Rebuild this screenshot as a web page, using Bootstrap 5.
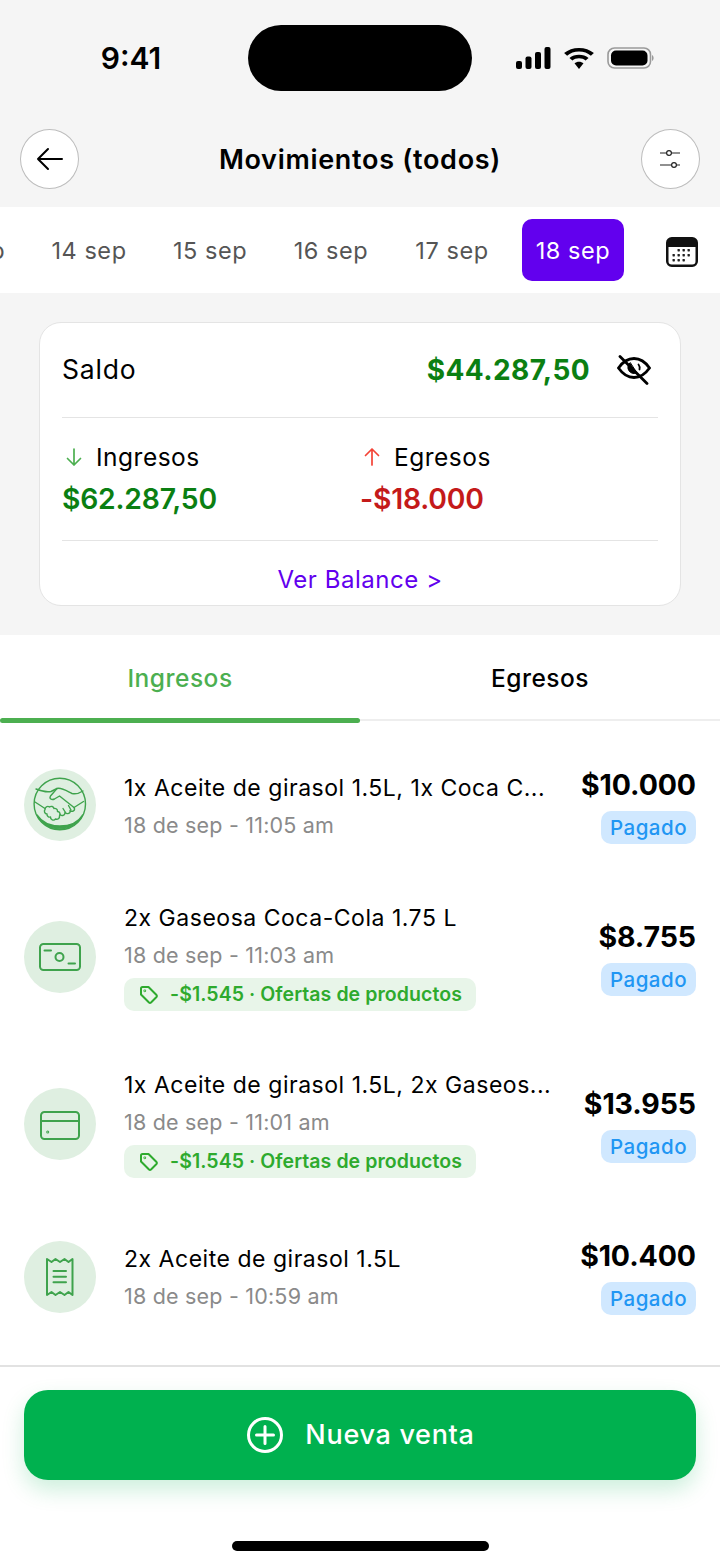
<!DOCTYPE html>
<html lang="es">
<head>
    <meta charset="UTF-8">
    <meta name="viewport" content="width=device-width, initial-scale=1.0">
    <title>Movimientos</title>
    <link rel="stylesheet" href="https://cdn.jsdelivr.net/npm/bootstrap@5.3.0/dist/css/bootstrap.min.css">
    <style>
        body { font-family: Inter, "Liberation Sans", sans-serif; background: #fff; color: #000; width: 720px; height: 1565px; overflow: hidden; }
        .top-area { background: #f5f5f5; }
        .status-bar { height: 115px; padding-top: 25px; }
        .status-time { width: 248px; height: 66px; font-size: 30px; font-weight: 600; padding-left: 14px; }
        .island { width: 224px; height: 66px; background: #000; border-radius: 33px; }
        .status-icons { width: 248px; height: 66px; padding-left: 44px; gap: 13px; }
        .head-row { height: 92px; padding: 14px 20px 18px; }
        .round-btn { width: 59px; height: 60px; padding: 0; border: 1px solid #bdbdbd; border-radius: 50%; background: #fff; }
        .head-title { font-size: 27px; font-weight: 600; letter-spacing: .7px; padding-top: 2px; }
        .date-strip { height: 86px; background: #fff; }
        .date-scroll { width: 624px; gap: 19px; overflow: hidden; }
        .date-item { flex: 0 0 102px; height: 62px; padding-top: 1px; font-size: 23.5px; letter-spacing: .55px; color: #555; border-radius: 10px; }
        .date-item.on { background: #6200ee; color: #fff; }
        .cal-box { width: 96px; padding: 4px 0 0 42px; }
        .summary-wrap { height: 342px; padding: 29px 39px 0; }
        .sum-card { height: 284px; border: 1px solid #e4e4e4; border-radius: 22px; padding: 0 22px; }
        .sum-top { height: 95px; border-bottom: 1px solid #e4e4e4; }
        .sum-mid { height: 123px; border-bottom: 1px solid #e4e4e4; padding-top: 24px; }
        .sum-label { font-size: 26.5px; letter-spacing: .8px; }
        .sum-total { font-size: 28px; font-weight: 700; letter-spacing: .4px; color: #0b7f12; }
        .eye-icon { margin: 0 7px 0 27px; }
        .sub-label { font-size: 24.5px; letter-spacing: .5px; height: 30px; gap: 13px; }
        .sub-label svg { margin-left: 3px; }
        .sub-total { font-size: 28.3px; font-weight: 600; letter-spacing: -.2px; line-height: 40px; margin-top: 7px; }
        .txt-in { color: #0b7f12; }
        .txt-out { color: #c41a1a; }
        .ver-link { display: block; padding-top: 14px; line-height: 50px; font-size: 24px; letter-spacing: .55px; color: #6200ee; text-align: center; text-decoration: none; }
        .tab-row { height: 86px; border-bottom: 2px solid #eeeeee; flex-wrap: nowrap; }
        .tab-row .nav-link { width: 360px; height: 86px; padding: 25px 0 0; text-align: center; font-size: 24.5px; font-weight: 500; letter-spacing: .5px; color: #000; border-radius: 0; position: relative; }
        .tab-row .nav-link.active { color: #4caf50; }
        .tab-row .nav-link.active::after { content: ""; position: absolute; left: 0; right: 0; bottom: -2px; height: 5px; background: #4caf50; border-radius: 3px; }
        .move-list { padding: 46px 24px 0; }
        .move-item { border: 0; padding: 0; margin-bottom: 55px; background: transparent; color: #000; }
        .move-item:nth-child(2) { margin-bottom: 51px; }
        .move-item:nth-child(3) { margin-bottom: 56px; }
        .move-icon { flex: 0 0 72px; width: 72px; height: 72px; border-radius: 50%; background: #dfefe1; margin-right: 28px; }
        .move-item:first-child .move-icon { margin-top: -1px; }
        .move-text { padding-top: 2px; }
        .move-text.with-promo { padding-bottom: 4px; }
        .move-title { font-size: 23px; letter-spacing: .52px; line-height: 34px; white-space: nowrap; }
        .move-time { font-size: 21.5px; letter-spacing: .2px; line-height: 34px; margin-top: 3px; color: #8a8a8a; white-space: nowrap; }
        .promo-pill { width: 352px; height: 33px; margin-top: 6px; padding-left: 15px; gap: 11px; background: #e8f5e9; border-radius: 10px; font-size: 19.5px; font-weight: 600; letter-spacing: .07px; color: #2eaa2e; white-space: nowrap; }
        .move-price { font-size: 28.5px; font-weight: 700; letter-spacing: -.1px; line-height: 36px; }
        .paid-pill { width: 95px; height: 33px; margin-top: 8px; padding: 0; line-height: 33px; background: #d0e8ff; color: #2196f3; border-radius: 10px; font-size: 20.5px; font-weight: 500; letter-spacing: .5px; }
        .foot-area { position: absolute; left: 0; right: 0; top: 1365px; border-top: 2px solid #e2e2e2; padding: 23px 24px 0; }
        .sale-btn { height: 90px; gap: 22px; padding-left: 14px; background: #00b14f; color: #fff; border: 0; border-radius: 24px; font-size: 27px; font-weight: 500; letter-spacing: .7px; box-shadow: 0 10px 22px rgba(0, 177, 79, .2); }
        .sale-btn:hover { background: #00b14f; color: #fff; }
        .home-bar { width: 257px; height: 10px; margin: 61px auto 0; background: #000; border-radius: 5px; }
    </style>
</head>
<body class="position-relative">
    <div class="top-area">
        <!-- Barra de estado -->
        <div class="status-bar d-flex">
            <div class="status-time d-flex align-items-center justify-content-center">9:41</div>
            <div class="island"></div>
            <div class="status-icons d-flex align-items-center">
                <svg width="35" height="22" viewBox="0 0 35 22"><rect x="0" y="14" width="6" height="8" rx="2"/><rect x="9.5" y="9.500" width="6" height="12.500" rx="2"/><rect x="19" y="5" width="6" height="17" rx="2"/><rect x="28.5" y="0" width="6" height="22" rx="2"/></svg>
                <svg width="30" height="21" viewBox="2 .9 26 21.600" preserveAspectRatio="none"><path d="M15 4.600c4 0 7.600 1.600 10.300 4.200l2.600-2.700C24.500 2.800 20 .9 15 .9S5.500 2.800 2.100 6.100l2.600 2.700C7.400 6.200 11 4.600 15 4.600z"/><path d="M15 11.500c2.200 0 4.200.9 5.700 2.300l2.600-2.700C21 9 18.200 7.800 15 7.800S9 9 6.700 11.100l2.600 2.700c1.500-1.400 3.500-2.300 5.700-2.300z"/><path d="M15 15c-1.500 0-2.900.6-3.900 1.600L15 22.500l3.900-5.900C17.900 15.600 16.500 15 15 15z"/></svg>
                <svg width="47" height="24" viewBox="0 0 47 24"><rect x="1" y="2" width="42.500" height="20" rx="6.500" fill="none" stroke="#9a9a9a" stroke-width="1.600"/><rect x="4" y="4.500" width="36.500" height="15" rx="5"/><path d="M45 9c1 .5 1.600 1.700 1.600 3s-.6 2.500-1.600 3z" fill="#9a9a9a"/></svg>
            </div>
        </div>

        <!-- Cabecera -->
        <div class="head-row d-flex align-items-center justify-content-between">
            <button class="round-btn d-flex align-items-center justify-content-center" type="button" aria-label="Volver">
                <svg width="28" height="24" viewBox="0 0 28 24" fill="none" stroke="#000" stroke-width="2" stroke-linecap="round" stroke-linejoin="round"><path d="M26 12H2M12 2 2 12l10 10"/></svg>
            </button>
            <div class="head-title">Movimientos (todos)</div>
            <button class="round-btn d-flex align-items-center justify-content-center" type="button" aria-label="Filtros">
                <svg width="22" height="24" viewBox="0 0 22 24" fill="none" stroke="#222" stroke-width="1.200"><path d="M1 6h6.600M12.400 6H21M1 18h11.600M17.400 18H21"/><circle cx="10" cy="6" r="2.400"/><circle cx="15" cy="18" r="2.400"/></svg>
            </button>
        </div>
    </div>

    <!-- Dates -->
    <div class="date-strip d-flex align-items-center">
        <div class="date-scroll d-flex justify-content-end">
            <div class="date-item d-flex align-items-center justify-content-center">13 sep</div>
            <div class="date-item d-flex align-items-center justify-content-center">14 sep</div>
            <div class="date-item d-flex align-items-center justify-content-center">15 sep</div>
            <div class="date-item d-flex align-items-center justify-content-center">16 sep</div>
            <div class="date-item d-flex align-items-center justify-content-center">17 sep</div>
            <div class="date-item on d-flex align-items-center justify-content-center">18 sep</div>
        </div>
        <div class="cal-box">
            <svg class="d-block" width="32" height="30" viewBox="0 0 32 30"><rect x="1.250" y="1.250" width="29.500" height="27.500" rx="4.500" fill="#fff" stroke="#111" stroke-width="2.500"/><path d="M1 5.500A4.500 4.500 0 0 1 5.500 1h21A4.500 4.500 0 0 1 31 5.500V10H1z" fill="#111"/><g fill="#222"><rect x="11.500" y="12" width="2.400" height="2.400" rx=".6"/><rect x="16.500" y="12" width="2.400" height="2.400" rx=".6"/><rect x="21.500" y="12" width="2.400" height="2.400" rx=".6"/><rect x="6.500" y="17" width="2.400" height="2.400" rx=".6"/><rect x="11.500" y="17" width="2.400" height="2.400" rx=".6"/><rect x="16.500" y="17" width="2.400" height="2.400" rx=".6"/><rect x="21.500" y="17" width="2.400" height="2.400" rx=".6"/><rect x="6.500" y="22" width="2.400" height="2.400" rx=".6"/><rect x="11.500" y="22" width="2.400" height="2.400" rx=".6"/><rect x="16.500" y="22" width="2.400" height="2.400" rx=".6"/></g></svg>
        </div>
    </div>

    <!-- Resumen -->
    <div class="top-area summary-wrap">
        <div class="card sum-card">
            <div class="sum-top d-flex align-items-center">
                <span class="sum-label">Saldo</span>
                <span class="sum-total ms-auto">$44.287,50</span>
                <svg class="eye-icon" width="34" height="30" viewBox="0 0 34 30" fill="none" stroke="#000" stroke-width="2.800" stroke-linecap="round"><path d="M1.500 13C6 6.500 11 3.500 17 3.500S28 6.500 32.500 13C28 19.500 23 22.500 17 22.500S6 19.500 1.500 13z"/><path d="M13 7.800a5.800 5.800 0 0 0 -1 8 5.800 5.800 0 0 0 7.500 2.200z" fill="#000" stroke-width="1"/><path d="M21.500 9.500a5.800 5.800 0 0 1 1 5" stroke-width="1.800"/><path d="M3 1.500l27 27"/></svg>
            </div>
            <div class="sum-mid d-flex">
                <div class="w-50">
                    <div class="sub-label d-flex align-items-center">
                        <svg width="18" height="20" viewBox="0 0 18 20" fill="none" stroke="#4caf50" stroke-width="1.700" stroke-linecap="round" stroke-linejoin="round"><path d="M9 2v16M2.500 11.500 9 18l6.500-6.500"/></svg>
                        <span>Ingresos</span>
                    </div>
                    <div class="sub-total txt-in">$62.287,50</div>
                </div>
                <div class="w-50">
                    <div class="sub-label d-flex align-items-center">
                        <svg width="18" height="20" viewBox="0 0 18 20" fill="none" stroke="#f44336" stroke-width="1.700" stroke-linecap="round" stroke-linejoin="round"><path d="M9 18V2M2.500 8.500 9 2l6.500 6.500"/></svg>
                        <span>Egresos</span>
                    </div>
                    <div class="sub-total txt-out">-$18.000</div>
                </div>
            </div>
            <a class="ver-link" href="#">Ver Balance &gt;</a>
        </div>
    </div>

    <!-- Tabs -->
    <ul class="nav tab-row">
        <li class="nav-item"><a class="nav-link active" href="#">Ingresos</a></li>
        <li class="nav-item"><a class="nav-link" href="#">Egresos</a></li>
    </ul>

    <!-- Lista de movimientos -->
    <div id="moveList" class="list-group list-group-flush move-list"></div>

    <!-- Boton inferior -->
    <div class="foot-area">
        <button class="btn sale-btn w-100 d-flex align-items-center justify-content-center" type="button">
            <svg width="36" height="36" viewBox="0 0 36 36" fill="none" stroke="#fff" stroke-width="3" stroke-linecap="round"><circle cx="18" cy="18" r="16.500"/><path d="M18 9.500v17M9.500 18h17"/></svg>
            <span>Nueva venta</span>
        </button>
        <div class="home-bar"></div>
    </div>

    <script>
        const iconStroke = 'fill="none" stroke="#3fa34d" stroke-width="2" stroke-linecap="round" stroke-linejoin="round"';
        const icons = {
            deal: `<svg width="72" height="72" viewBox="0 0 72 72" ${iconStroke.replace('stroke-width="2"', 'stroke-width="1.400"')}>
                <circle cx="35.800" cy="35" r="25.700"/>
                <path d="M13 46A25.700 25.700 0 0 0 58.600 46C54 53.500 46 57 35.800 57S18 53.500 13 46z" fill="#3fa34d"/>
                <path d="M12 20c5 2 10 3.500 15 2.500l6-3c4-1.500 10 2.500 15 5 4 1 7 0 11-2.500"/>
                <path d="M33 19.500 26.500 27c-1.500 2.500 1 4.500 4 3l5-3 14.500 11.500c2 3-2 5-4 3 1 3-3 4-5 2 0 3-3 4-5 2"/>
                <path d="M50 38.500l9.500-6M11 33l10 6.500M44.500 36.500l2.500 4.500M39 39.500l2.500 4"/>
                <path d="M21 40.500a2.800 2.800 0 0 1 4.500-2.500 2.800 2.800 0 0 1 4.500 1.500 2.800 2.800 0 0 1 3.500 3 2.800 2.800 0 0 1 2 4.500 2.800 2.800 0 0 1-4 3 2.800 2.800 0 0 1-5-2 2.800 2.800 0 0 1-3.500-3 2.800 2.800 0 0 1-2-4.500z"/>
            </svg>`,
            cash: `<svg width="72" height="72" viewBox="0 0 72 72" ${iconStroke}>
                <rect x="16" y="23" width="40" height="26" rx="3.500"/><circle cx="35.500" cy="36" r="4"/><path d="M20.500 29.500H27M44.500 42.500H51"/>
            </svg>`,
            card: `<svg width="72" height="72" viewBox="0 0 72 72" ${iconStroke}>
                <rect x="17" y="24" width="38" height="27" rx="3.500"/><path d="M17 33h38"/><circle cx="23.700" cy="44" r=".5"/>
            </svg>`,
            receipt: `<svg width="72" height="72" viewBox="0 0 72 72" ${iconStroke}>
                <path d="M23 18l4.500 3 4-3 4.500 3 4.500-3 4 3 4-3v36l-4-3-4 3-4.500-3-4.500 3-4-3-4.500 3z"/><path d="M29.500 30h12.500M29.500 35.700h12.500M29.500 41.300h12.500"/>
            </svg>`
        };
        const tagIcon = '<svg width="20" height="20" viewBox="0 0 20 20" fill="none" stroke="#2eaa2e" stroke-width="2" stroke-linejoin="round"><path d="M2 3.500A1.500 1.500 0 0 1 3.500 2h6l8 8a1.500 1.500 0 0 1 0 2l-5.500 5.500a1.500 1.500 0 0 1-2 0l-8-8z"/><circle cx="5.800" cy="5.800" r=".4"/></svg>';

        const moves = [
            { icon: "deal", title: "1x Aceite de girasol 1.5L, 1x Coca C...", time: "18 de sep - 11:05 am", price: "$10.000" },
            { icon: "cash", title: "2x Gaseosa Coca-Cola 1.75 L", time: "18 de sep - 11:03 am", price: "$8.755", promo: "-$1.545 · Ofertas de productos" },
            { icon: "card", title: "1x Aceite de girasol 1.5L, 2x Gaseos...", time: "18 de sep - 11:01 am", price: "$13.955", promo: "-$1.545 · Ofertas de productos" },
            { icon: "receipt", title: "2x Aceite de girasol 1.5L", time: "18 de sep - 10:59 am", price: "$10.400" }
        ];

        const moveList = document.getElementById("moveList");
        moves.forEach(move => {
            const row = document.createElement("div");
            row.className = "list-group-item move-item d-flex align-items-center";
            const promo = move.promo ? `<div class="promo-pill d-flex align-items-center">${tagIcon}<span>${move.promo}</span></div>` : "";
            row.innerHTML = `
                <div class="move-icon">${icons[move.icon]}</div>
                <div class="move-text flex-grow-1 ${move.promo ? "with-promo" : ""}">
                    <div class="move-title">${move.title}</div>
                    <div class="move-time">${move.time}</div>
                    ${promo}
                </div>
                <div class="text-end">
                    <div class="move-price">${move.price}</div>
                    <span class="badge paid-pill d-block ms-auto">Pagado</span>
                </div>`;
            moveList.appendChild(row);
        });
    </script>
    <script src="https://cdn.jsdelivr.net/npm/bootstrap@5.3.0/dist/js/bootstrap.bundle.min.js"></script>
</body>
</html>
